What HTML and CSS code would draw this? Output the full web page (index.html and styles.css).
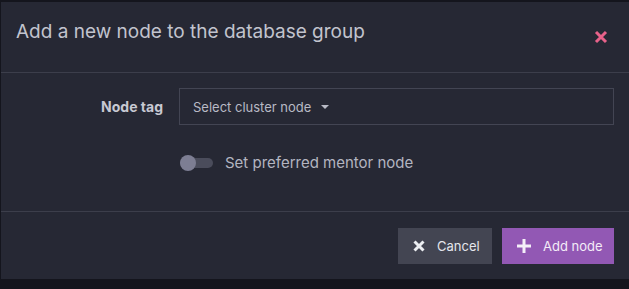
FILE: index.html
```html
<!DOCTYPE html>
<html lang="en">
<head>
  <meta charset="UTF-8" />
  <meta name="viewport" content="width=device-width, initial-scale=1" />
  <title>Add node</title>
  <link rel="stylesheet" href="styles.css">
</head>
<body>
  <div class="modal">
    <div class="modal-header">
      <h4 class="modal-title">Add a new node to the database group</h4>
      <button class="close-btn" title="Close">
        <svg width="14" height="14" viewBox="0 0 14 14"><path d="M2 2 L12 12 M12 2 L2 12" stroke="#e8628a" stroke-width="3" /></svg>
      </button>
    </div>
    <div class="modal-body">
      <div class="form-row">
        <label class="form-label">Node tag</label>
        <div class="select-box">
          <span>Select cluster node</span>
          <span class="caret"></span>
        </div>
      </div>
      <div class="toggle-row">
        <span class="switch"><span class="knob"></span></span>
        <span class="toggle-text">Set preferred mentor node</span>
      </div>
    </div>
    <div class="modal-footer">
      <button class="btn btn-cancel">
        <svg width="12" height="12" viewBox="0 0 12 12"><path d="M1.5 1.5 L10.5 10.5 M10.5 1.5 L1.5 10.5" stroke="#eceef2" stroke-width="3" /></svg>
        Cancel
      </button>
      <button class="btn btn-add">
        <svg width="14" height="14" viewBox="0 0 14 14"><path d="M7 0 V14 M0 7 H14" stroke="#f4eef8" stroke-width="3" /></svg>
        Add node
      </button>
    </div>
  </div>
</body>
</html>
```

FILE: styles.css
```css
* {
  box-sizing: border-box;
  margin: 0;
  padding: 0;
  font-family: 'Inter', sans-serif;
}
body {
  background: #14151d;
  overflow: hidden;
}
.modal {
  background: #262834;
  margin: 2px 0 0 1px;
  width: 628px;
  height: 277px;
  display: flex;
  flex-direction: column;
}
.modal-header {
  height: 71px;
  border-bottom: 1px solid #3c3e4b;
  display: flex;
  align-items: flex-start;
  justify-content: space-between;
  padding: 18px 21px 0 15px;
}
.modal-title {
  font-size: 19px;
  font-weight: 400;
  color: #c2c4ce;
}
.close-btn {
  background: none;
  border: none;
  margin-top: 10px;
  cursor: pointer;
}
.modal-body {
  height: 139px;
  border-bottom: 1px solid #3c3e4b;
  padding: 15px 15px 0 15px;
}
.form-row {
  display: grid;
  grid-template-columns: 147px 1fr;
  gap: 16px;
  align-items: center;
}
.form-label {
  text-align: right;
  font-weight: 700;
  font-size: 14px;
  color: #c7c9d2;
}
.select-box {
  height: 37px;
  border: 1px solid #434553;
  display: flex;
  align-items: center;
  gap: 10px;
  padding: 0 13px;
  font-size: 13px;
  color: #b8bac5;
}
.caret {
  width: 0;
  height: 0;
  border-left: 4px solid transparent;
  border-right: 4px solid transparent;
  border-top: 4px solid #b8bac5;
}
.toggle-row {
  display: flex;
  align-items: center;
  gap: 12px;
  margin: 28px 0 0 164px;
}
.switch {
  position: relative;
  width: 33px;
  height: 10px;
  border-radius: 5px;
  background: #4a4c5b;
}
.knob {
  position: absolute;
  left: 0;
  top: -3px;
  width: 16px;
  height: 16px;
  border-radius: 50%;
  background: #7d7e93;
}
.toggle-text {
  font-size: 15px;
  color: #b3b5c0;
}
.modal-footer {
  flex: 1;
  display: flex;
  justify-content: flex-end;
  align-items: flex-start;
  gap: 10px;
  padding: 16px 15px 0 0;
}
.btn {
  height: 36px;
  border: none;
  display: flex;
  align-items: center;
  gap: 12px;
  font-size: 13px;
  cursor: pointer;
}
.btn-cancel {
  width: 94px;
  padding-left: 15px;
  background: #434552;
  color: #e4e6ec;
}
.btn-add {
  width: 112px;
  padding-left: 15px;
  background: #9258b4;
  color: #f2ecf7;
}
```
